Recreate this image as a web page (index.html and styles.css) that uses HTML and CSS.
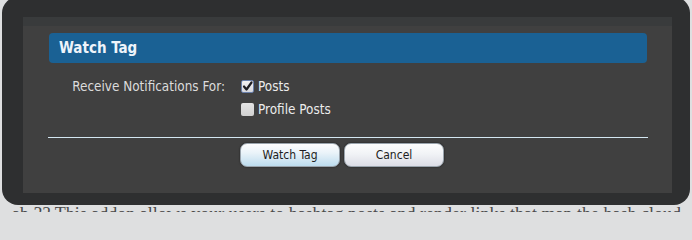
FILE: index.html
```html
<!DOCTYPE html>
<html>
<head>
<meta charset="utf-8">
<link rel="stylesheet" href="styles.css">
</head>
<body>
<div class="page">
  <p class="page-text">ab 3? This addon allows your users to hashtag posts and render links that map the hash cloud</p>
</div>
<div class="overlay">
  <div class="panel">
    <h2 class="heading">Watch Tag</h2>
    <div class="form-row">
      <div class="label">Receive Notifications For:</div>
      <ul class="choices">
        <li class="choice"><span class="box checked"><svg viewBox="0 0 13 13" width="13" height="13"><path d="M3 6.5 L5.5 9.5 L10.5 2.5" fill="none" stroke="#1d1d22" stroke-width="2.2" stroke-linecap="round" stroke-linejoin="round"/></svg></span><span class="choice-text">Posts</span></li>
        <li class="choice"><span class="box"></span><span class="choice-text">Profile Posts</span></li>
      </ul>
    </div>
    <hr class="divider">
    <div class="buttons">
      <button class="btn primary">Watch Tag</button>
      <button class="btn">Cancel</button>
    </div>
  </div>
</div>
</body>
</html>
```
FILE: styles.css
```css
html, body {
  margin: 0;
  padding: 0;
}
html {
  height: 212px;
  overflow: hidden;
}
body {
  width: 692px;
  height: 212px;
  overflow: hidden;
  position: relative;
  background: #dedfe0;
  font-family: "DejaVu Sans Condensed", "DejaVu Sans", sans-serif;
}
.page {
  padding-top: 204px;
  width: 692px;
  overflow: hidden;
}
.page-text {
  margin: 0;
  white-space: nowrap;
  font-family: "Liberation Serif", serif;
  font-size: 18px;
  line-height: 20px;
  color: #4a4a4a;
  padding-left: 12px;
}
.overlay {
  position: absolute;
  left: 2px;
  top: -3px;
  width: 688px;
  height: 208px;
  box-sizing: border-box;
  padding: 20px 18px 12px 21px;
  border-radius: 16px;
  background: #2e2f30;
}
.panel {
  height: 176px;
  box-sizing: border-box;
  padding: 16px 25px 0 26px;
  background: linear-gradient(#393b3c 0, #393b3c 9px, #404040 9px, #404040 100%);
}
.heading {
  margin: 0;
  height: 30px;
  line-height: 30px;
  padding-left: 10px;
  border-radius: 4px;
  background: #1a6194;
  color: #eef4fa;
  font-size: 15px;
  font-weight: bold;
}
.form-row {
  display: flex;
  padding-top: 12px;
}
.label {
  width: 176px;
  text-align: right;
  color: #dcdcdc;
  font-size: 13.4px;
  line-height: 23px;
  margin-right: 16px;
}
.choices {
  list-style: none;
  margin: 0;
  padding: 0;
}
.choice {
  display: flex;
  align-items: center;
  height: 23px;
}
.box {
  width: 13px;
  height: 13px;
  box-sizing: border-box;
  border-radius: 2px;
  background: linear-gradient(#e4e4e4, #d0d0d0);
  margin-right: 4px;
  display: flex;
}
.box.checked {
  border: 1px solid #6a80aa;
  background: linear-gradient(#f2f2f2, #d6d8de);
}
.box.checked svg {
  margin: -1px;
}
.choice-text {
  color: #ececec;
  font-size: 13.4px;
}
.divider {
  border: 0;
  height: 1px;
  margin: 16px -1px 0 -1px;
  background: #d3e6f1;
}
.buttons {
  display: flex;
  gap: 4px;
  padding-left: 191px;
  margin-top: 5px;
}
.btn {
  width: 100px;
  height: 24px;
  border-radius: 7px;
  border: 1px solid #9aa4ad;
  box-shadow: 0 0 2px rgba(0, 0, 0, 0.6);
  background: linear-gradient(#fdfdfd 0%, #f1f3f6 45%, #dcdde6 100%);
  font-family: "DejaVu Sans Condensed", "DejaVu Sans", sans-serif;
  font-size: 12px;
  color: #1e1e22;
  padding: 0;
}
.btn.primary {
  background: linear-gradient(#fdfdfe 0%, #eaf3f9 40%, #bcdcee 100%);
}
```
